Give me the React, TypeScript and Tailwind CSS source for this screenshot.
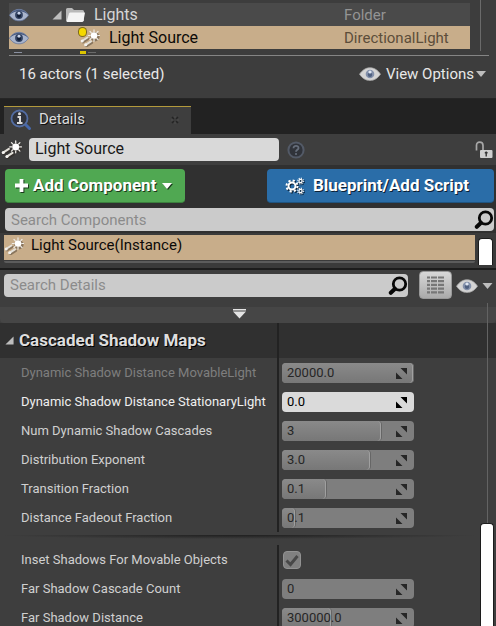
import { useState } from "react";

function Eye({ blue = false, className = "" }: { blue?: boolean; className?: string }) {
  return (
    <svg viewBox="0 0 22 14" className={className} aria-hidden="true">
      <path d="M0.5 7.2C4 2.4 7.2 0.8 11 0.8s7.2 1.6 10.5 6.4C18.200 11.800 15 13.400 11 13.400S3.700 11.800 0.500 7.200z" fill={blue ? "#a9b4cc" : "#d4d4d4"} stroke={blue ? "#5d6f98" : "#a8a8a8"} strokeWidth="0.8" />
      {blue && <path d="M1 6.500C4 2.500 7.200 1.200 11 1.200s7 1.300 10 5.300C17.500 4 14.500 3 11 3S4.500 4 1 6.500z" fill="#47597f" />}
      <circle cx="11" cy="7" r="4.300" fill={blue ? "#334363" : "#8390aa"} />
      <circle cx="11" cy="7.800" r="2.200" fill={blue ? "#101c35" : "#4f6080"} />
      <circle cx="11" cy="5" r="1.600" fill={blue ? "#c9d4ea" : "#dfe6f2"} />
    </svg>
  );
}

function LightIcon({ className = "" }: { className?: string }) {
  return (
    <svg viewBox="0 0 20 18" className={className} fill="none" strokeLinecap="round" aria-hidden="true">
      <g stroke="#2a2018" strokeOpacity="0.400" strokeWidth="2.400" transform="translate(0.900 1.200)">
        <path d="M2 12 7.500 8.500M5.500 16 11 12.500" />
        <circle cx="14" cy="6.500" r="3.500" />
      </g>
      <path d="M2 12 7.500 8.500M5.500 15.800 11 12.300" stroke="#e4e1da" strokeWidth="2" />
      <circle cx="2.200" cy="11.900" r="1.500" fill="#f4f2ee" />
      <circle cx="5.700" cy="15.700" r="1.500" fill="#f4f2ee" />
      <circle cx="14" cy="6.500" r="3.300" fill="#fff" />
      <path d="M14 0.800v2M14 10.200v2M8.300 6.500h2M17.700 6.500h1.800M10 2.500l1.200 1.200M18 2.500l-1.200 1.200M18 10.500l-1.200-1.200M10 10.500l1.200-1.200" stroke="#eeebe6" strokeWidth="1.200" />
    </svg>
  );
}

function Folder({ className = "" }: { className?: string }) {
  return (
    <svg viewBox="0 0 21 16" className={className} aria-hidden="true">
      <path d="M1 14V2.500Q1 1 2.500 1H7l2 2h8.500Q19 3 19 4.500V14z" fill="#b9b9b9" />
      <path d="M1.500 15 4 6.500Q4.300 5.500 5.500 5.500H20L18.500 14q-.2 1-1.500 1z" fill="#f4f4f4" />
    </svg>
  );
}

function Magnifier({ className = "" }: { className?: string }) {
  return (
    <svg viewBox="0 0 20 20" className={className} fill="none" stroke="#080808" aria-hidden="true">
      <circle cx="11.500" cy="8" r="6.200" strokeWidth="2.800" />
      <path d="M7 12.800 2.800 16.800" strokeWidth="4" strokeLinecap="round" />
    </svg>
  );
}

function Corner({ className = "" }: { className?: string }) {
  return (
    <svg viewBox="0 0 10 10" className={className} aria-hidden="true">
      <path d="M9.500 0.500V9.500H0.500z" fill="#bdbdbd" />
    </svg>
  );
}

function Down({ className = "" }: { className?: string }) {
  return (
    <svg viewBox="0 0 10 6" className={className} fill="currentColor" aria-hidden="true">
      <path d="M0 0h10L5 6z" />
    </svg>
  );
}

function Cog({ x, y, r, w }: { x: number; y: number; r: number; w: number }) {
  return (
    <g>
      <circle cx={x} cy={y} r={r} strokeWidth={w} />
      <circle cx={x} cy={y} r={r + w} strokeWidth={w} strokeDasharray={`${((r + w) * Math.PI) / 8} ${((r + w) * Math.PI) / 8}`} />
    </g>
  );
}

function Outliner() {
  return (
    <section className="relative border-b border-[#262626] bg-[#3d3d3d]">
      <div className="ml-[9px] mr-[26px] pt-[3px] text-[16px]">
        <div className="flex h-[23px] items-center bg-[#4a4a4a] pt-px text-[#d6d6d6]">
          <Eye blue className="h-[14px] w-5" />
          <Corner className="ml-[23px] h-[10px] w-[10px]" />
          <Folder className="ml-[3px] h-4 w-[21px]" />
          <span className="ml-2 flex-1">Lights</span>
          <span className="w-[126px] text-[15px] text-[#949494]">Folder</span>
        </div>
        <div className="flex h-[23px] items-center bg-[#c8ad8a] pt-px text-[#0c0a08]">
          <Eye blue className="h-[14px] w-5" />
          <span className="relative ml-[51px] flex">
            <LightIcon className="h-[18px] w-5" />
            <i className="absolute -left-px -top-px h-2 w-[7px] rounded-full bg-[#f5d800] ring-1 ring-[#7d6a1c]" />
          </span>
          <span className="ml-[9px] flex-1">Light Source</span>
          <span className="w-[126px] text-[15px] text-[#5c4d3a]">DirectionalLight</span>
        </div>
        <div className="flex h-[6px] items-end">
          <i className="mb-[2px] ml-[5px] h-px w-2 bg-[#8a90a0]" />
          <i className="mb-px ml-[58px] h-[3px] w-[6px] bg-[#dcc400]" />
          <i className="mb-[2px] ml-[2px] h-px w-2 bg-[#6a6a6a]" />
        </div>
      </div>
      <div className="absolute right-[15px] top-0 h-[51px] w-px bg-[#6a6a6a]" />
      <div className="ml-[9px] mr-[7px] h-px bg-[#858585]" />
      <div className="flex h-[42px] items-center justify-between pb-[6px] pl-[19px] pr-[10px] text-[15px] text-[#e8e8e8]">
        <span>16 actors (1 selected)</span>
        <button className="flex items-center">
          <Eye className="mr-[5px] h-[14px] w-[22px]" />
          View Options
          <Down className="ml-[2px] h-[6px] w-[10px] text-[#bdbdbd]" />
        </button>
      </div>
    </section>
  );
}

function TabStrip() {
  return (
    <div className="flex h-[35px] items-end bg-[#222] pl-1">
      <div role="tab" className="flex h-7 w-[187px] items-center border-t border-[#b39a3c] bg-[#3e3e3e] pb-[2px] pl-[6px] pr-3">
        <svg viewBox="0 0 22 22" className="h-[22px] w-[22px]" aria-hidden="true">
          <path d="m15 15 4.500 4.500" stroke="#4668ad" strokeWidth="3" strokeLinecap="round" />
          <circle cx="9.500" cy="9.500" r="8" fill="#30333b" stroke="#536da3" strokeWidth="1.800" />
          <path d="M7.500 8H10v5.500M7 14h5.500" stroke="#ddd" strokeWidth="2" fill="none" />
          <circle cx="9.500" cy="4.800" r="1.500" fill="#ddd" />
        </svg>
        <span className="ml-[7px] flex-1 text-[15px] text-[#dcdcdc] [text-shadow:1px_1px_0_#111]">Details</span>
        <button aria-label="Close tab">
          <svg viewBox="0 0 8 8" className="h-2 w-2" aria-hidden="true">
            <path d="M1 1l6 6M7 1 1 7" stroke="#242424" strokeWidth="1.500" />
            <path d="M4 0v8M0 4h8" stroke="#5c5c5c" strokeWidth="0.500" />
          </svg>
        </button>
      </div>
    </div>
  );
}

function ActorName() {
  return (
    <div className="flex h-[31px] items-center bg-[#3e3e3e] pl-[1px] pr-[3px]">
      <LightIcon className="h-[19px] w-[21px]" />
      <input aria-label="Actor name" defaultValue="Light Source" className="ml-[7px] h-[23px] w-[250px] rounded bg-[#d9d9d9] px-[6px] pb-px text-[16px] text-[#1a1a1a]" />
      <button aria-label="Help" className="ml-2">
        <svg viewBox="0 0 18 18" className="h-[18px] w-[18px]" fill="none" aria-hidden="true">
          <circle cx="9" cy="9" r="7.600" fill="#30333a" stroke="#535a67" strokeWidth="2" />
          <path d="M6.500 7.200C6.500 3.900 11.700 4.200 11.500 7.100 11.400 8.800 9 8.800 9 10.800" stroke="#666e7b" strokeWidth="1.800" />
          <circle cx="9" cy="13" r="1.100" fill="#666e7b" />
        </svg>
      </button>
      <button aria-label="Lock selection" className="ml-auto">
        <svg viewBox="0 0 18 18" className="h-[18px] w-[18px]" fill="none" aria-hidden="true">
          <path d="M1.500 9.500V4.500Q1.500 1.200 4.700 1.200T8 4.500V9" stroke="#a8a8a8" strokeWidth="1.700" />
          <rect x="5" y="9" width="12.500" height="8" rx="1" fill="#cfcfcf" />
          <path d="M11.200 10.500v5M9.800 11.700h2.800" stroke="#333" strokeWidth="1.400" />
        </svg>
      </button>
    </div>
  );
}

function Components() {
  return (
    <section className="border-b-2 border-[#1c1c1c] bg-[#303030]">
      <div className="flex justify-between pb-[5px] pl-[5px] pr-[2px] pt-1">
        <button className="flex h-[34px] w-[180px] items-center rounded-sm border-b border-[#3b803e] bg-[#50a852] pl-[10px] text-[17px] font-bold text-white [text-shadow:1px_1px_0_#1b3a1c]">
          <svg viewBox="0 0 14 14" className="h-[14px] w-[14px] overflow-visible" aria-hidden="true">
            <path d="M7.500 1v13M1 7.500h13" stroke="#1b3a1c" strokeWidth="3.800" />
            <path d="M6.500 0v13M0 6.500h13" stroke="#fff" strokeWidth="3.800" />
          </svg>
          <span className="ml-[4px]">Add Component</span>
          <Down className="ml-[6px] h-[6px] w-[10px] drop-shadow-[1px_1px_0_#1b3a1c]" />
        </button>
        <button className="flex h-[34px] w-[227px] items-center rounded-sm border-b border-[#1f5480] bg-[#2a6da8] pl-[18px] text-[17px] font-bold text-white [text-shadow:1px_1px_0_#0c2136]">
          <svg viewBox="0 0 20 18" className="h-[18px] w-5 drop-shadow-[1px_1px_0_#0c2136]" fill="none" stroke="#fff" aria-hidden="true">
            <Cog x={7} y={9} r={3.500} w={2} />
            <Cog x={15.500} y={4} r={1.600} w={1.200} />
            <Cog x={15.500} y={14} r={1.600} w={1.200} />
          </svg>
          <span className="ml-2">Blueprint/Add Script</span>
        </button>
      </div>
      <label className="ml-[5px] mr-[2px] flex h-[23px] items-center rounded-sm bg-[#cbcbcb]">
        <input aria-label="Search Components" placeholder="Search Components" className="h-full min-w-0 flex-1 bg-transparent px-[6px] text-[15px] outline-none placeholder:text-[#8b8b8b]" />
        <Magnifier className="h-5 w-5" />
      </label>
      <div className="mt-[2px] flex h-[35px] bg-[#3a3a3a] pl-1 pr-[3px] pt-[2px]">
        <div className="flex-1">
          <div className="flex h-[25px] items-center bg-[#c8ad8a] pb-1 text-[15px] text-[#0c0a08]">
            <LightIcon className="h-[18px] w-5" />
            <span className="ml-[7px]">Light Source(Instance)</span>
          </div>
          <div className="mt-px h-[2px] rounded-b bg-[#5c5c5c]" />
        </div>
        <div className="ml-[3px] mt-[3px] h-[27px] w-[15px] rounded-t-sm border border-b-0 border-[#1c1c1c] bg-white" />
      </div>
    </section>
  );
}

function DetailsToolbar() {
  return (
    <div className="flex h-[37px] items-start bg-[#3e3e3e] pl-1 pr-[3px] pt-px">
      <label className="mt-[3px] flex h-[23px] min-w-0 flex-1 items-center rounded-sm bg-[#cbcbcb]">
        <input aria-label="Search Details" placeholder="Search Details" className="h-full min-w-0 flex-1 bg-transparent px-[6px] pb-px text-[15px] outline-none placeholder:text-[#8b8b8b]" />
        <Magnifier className="h-5 w-5" />
      </label>
      <button aria-label="Property matrix" className="ml-[11px] flex h-[28px] w-[33px] items-center justify-center rounded-sm border border-[#999] bg-linear-to-b from-[#d8d8d8] to-[#aaa]">
        <svg viewBox="0 0 17 18" className="h-[18px] w-[17px]" stroke="#777" strokeWidth="2.200" aria-hidden="true">
          {[1.5, 5.2, 8.900, 12.600, 16.300].map((y) => (
            <path key={y} d={`M0 ${y}h3M4 ${y}h6M11 ${y}h6`} />
          ))}
        </svg>
      </button>
      <button aria-label="View options" className="ml-1 flex h-[30px] items-center">
        <Eye className="h-[14px] w-[22px]" />
        <Down className="ml-1 h-[6px] w-[11px] text-[#bdbdbd]" />
      </button>
    </div>
  );
}

type Prop = { label: string; value: string; fill: number; state?: "dim" | "active" };

const cascaded: Prop[] = [
  { label: "Dynamic Shadow Distance MovableLight", value: "20000.0", fill: 99, state: "dim" },
  { label: "Dynamic Shadow Distance StationaryLight", value: "0.0", fill: 0, state: "active" },
  { label: "Num Dynamic Shadow Cascades", value: "3", fill: 75 },
  { label: "Distribution Exponent", value: "3.0", fill: 67 },
  { label: "Transition Fraction", value: "0.1", fill: 33 },
  { label: "Distance Fadeout Fraction", value: "0.1", fill: 10 },
];

const advanced: Prop[] = [
  { label: "Far Shadow Cascade Count", value: "0", fill: 0 },
  { label: "Far Shadow Distance", value: "300000.0", fill: 37 },
];

function PropRow({ label, value, fill, state }: Prop) {
  const active = state === "active";
  const id = label.replaceAll(" ", "-");
  return (
    <div className="flex h-[29px] shrink-0">
      <label htmlFor={id} className={`flex w-[277px] items-center whitespace-nowrap pl-[21px] ${state === "dim" ? "text-[#7e7e7e]" : active ? "text-[#efefef]" : "text-[#d0d0d0]"}`}>
        {label}
      </label>
      <div className="flex items-center border-l-2 border-[#222] pl-[3px]">
        <div className={`relative h-5 w-[132px] overflow-hidden rounded ${active ? "bg-[#dadada]" : "bg-[#7e7e7e]"}`}>
          {fill > 0 && (
            <div className="absolute inset-y-0 left-0 rounded-r border-r border-[#a0a0a0] bg-linear-to-b from-[#8a8a8a] to-[#777] shadow-[1px_0_0_#666]" style={{ width: `${fill}%` }} />
          )}
          <input id={id} defaultValue={value} className={`relative block h-full w-full bg-transparent pl-[5px] pr-5 outline-none ${active ? "text-black" : "text-[#262626]"}`} />
          <svg viewBox="0 0 11 11" className="absolute right-[7px] top-[5px] h-[11px] w-[11px]" fill={active ? "#000" : "#262626"} aria-hidden="true">
            <path d="M4.500 0H11v6.500zM0 4.500V11h6.500z" />
          </svg>
        </div>
      </div>
    </div>
  );
}

function InsetShadows() {
  const [on, setOn] = useState(true);
  return (
    <div className="flex h-[29px] shrink-0">
      <label htmlFor="inset" className="flex w-[277px] items-center pl-[21px] text-[#d0d0d0]">
        Inset Shadows For Movable Objects
      </label>
      <div className="flex items-center border-l-2 border-[#222] pl-1">
        <span className="relative flex">
          <input id="inset" type="checkbox" checked={on} onChange={() => setOn(!on)} className="h-[18px] w-[18px] appearance-none rounded-sm border border-[#929292] bg-[#808080]" />
          {on && (
            <svg viewBox="0 0 18 18" className="pointer-events-none absolute inset-0" fill="none" aria-hidden="true">
              <path d="m3.500 9.500 4 4 7-8.500" stroke="#484848" strokeWidth="3" />
            </svg>
          )}
        </span>
      </div>
    </div>
  );
}

export default function App() {
  return (
    <main className="flex h-screen flex-col overflow-hidden bg-[#3e3e3e] font-[Roboto,sans-serif] *:shrink-0">
      <Outliner />
      <TabStrip />
      <ActorName />
      <Components />
      <DetailsToolbar />
      <section className="relative flex min-h-0 flex-1 shrink! flex-col text-[13px]">
        <button aria-label="Show more" className="flex h-4 shrink-0 items-start justify-center rounded-b bg-[#464646] pt-[2px] pr-[17px]">
          <svg viewBox="0 0 13 10" className="h-[10px] w-[13px]" fill="#e4e4e4" aria-hidden="true">
            <path d="M0 0h13v1.500H0zM0 2.500h13L6.500 9.500z" />
          </svg>
        </button>
        <div className="flex h-[35px] shrink-0 bg-[#303030]">
          <h2 className="flex w-[277px] items-center pl-[5px] text-[17px] font-bold text-[#dedede] [text-shadow:1px_1px_0_#000]">
            <Corner className="mr-[5px] h-[9px] w-[9px]" />
            Cascaded Shadow Maps
          </h2>
          <div className="border-l-2 border-[#222]" />
        </div>
        {cascaded.map((p) => (
          <PropRow key={p.label} {...p} />
        ))}
        <div className="mb-[6px] mr-[18px] mt-[3px] h-[4px] shrink-0 bg-radial-[50%_100%_at_50%_0%] from-[#1f1f1f] to-[#3e3e3e]" />
        <InsetShadows />
        {advanced.map((p) => (
          <PropRow key={p.label} {...p} />
        ))}
        <div className="absolute -top-1 bottom-0 right-[2px] flex w-[14px] flex-col items-center">
          <div className="h-[220px] w-px bg-[#636363]" />
          <div className="w-full flex-1 rounded-t-sm border border-b-0 border-[#1c1c1c] bg-white" />
        </div>
      </section>
    </main>
  );
}
